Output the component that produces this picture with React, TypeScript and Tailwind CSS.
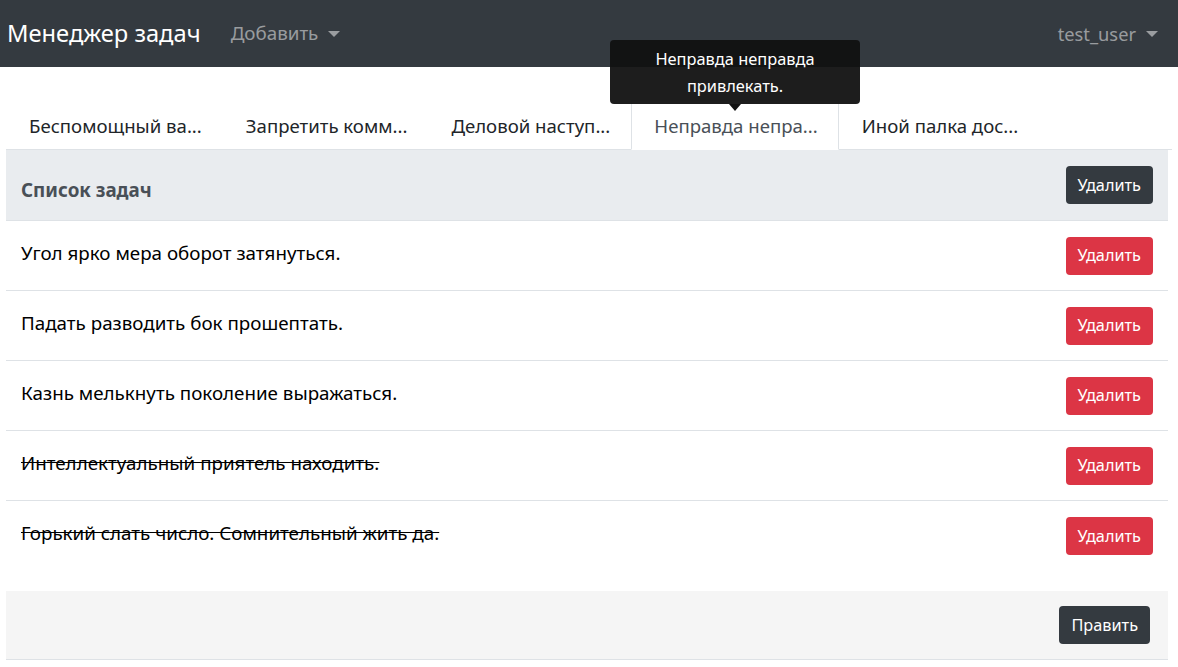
const tabs = [
  "Беспомощный ва...",
  "Запретить комм...",
  "Деловой наступ...",
  "Неправда непра...",
  "Иной палка дос...",
];

const tasks = [
  { text: "Угол ярко мера оборот затянуться.", done: false },
  { text: "Падать разводить бок прошептать.", done: false },
  { text: "Казнь мелькнуть поколение выражаться.", done: false },
  { text: "Интеллектуальный приятель находить.", done: true },
  { text: "Горький слать число. Сомнительный жить да.", done: true },
];

function Caret() {
  return (
    <span className="ml-[10px] inline-block h-0 w-0 border-x-[6px] border-t-[6px] border-x-transparent border-t-current align-middle" />
  );
}

export default function App() {
  return (
    <div className="relative min-h-[667px] bg-white text-[#212529] [font-family:'Noto_Sans',sans-serif]">
      <nav className="flex h-[67px] items-center bg-[#343a40] pl-[7px] pr-[20px]">
        <span className="text-[23.7px] text-white">Менеджер задач</span>
        <span className="ml-[30px] flex items-center text-[18.8px] text-white/50">
          Добавить
          <Caret />
        </span>
        <span className="ml-auto flex items-center text-[18.3px] text-white/50">
          test_user
          <Caret />
        </span>
      </nav>

      <div className="mt-[33px] px-[6px]">
        <div className="flex h-[50px] border-b border-[#dee2e6]">
          {tabs.map((t, i) => (
            <div
              key={t}
              className={
                i === 3
                  ? "-mb-px flex items-center border border-b-white border-[#dee2e6] bg-white pl-[22px] pr-[20px] pt-[1px] text-[18.6px] text-[#495057]"
                  : "-mb-px flex items-center border border-transparent pl-[22px] pr-[20px] pt-[1px] text-[18.6px]"
              }
            >
              {t}
            </div>
          ))}
        </div>

        <div className="mr-[4px]">
          <div className="flex h-[71px] items-center justify-between border-b border-[#dee2e6] bg-[#e9ecef] px-[15px]">
            <span className="pt-[11px] text-[18.8px] font-bold text-[#495057]">Список задач</span>
            <button className="h-[38px] rounded-[4px] bg-[#343a40] px-[12px] text-[16.3px] text-white">
              Удалить
            </button>
          </div>
          {tasks.map((task, i) => (
            <div
              key={task.text}
              className={
                "flex h-[70px] items-center justify-between px-[15px] " +
                (i < tasks.length - 1 ? "border-b border-[#dee2e6]" : "")
              }
            >
              <span
                className={
                  task.done
                    ? "pb-[5px] text-[18.8px] text-black line-through"
                    : "pb-[5px] text-[18.8px] text-black"
                }
              >
                {task.text}
              </span>
              <button className="h-[38px] rounded-[4px] bg-[#dc3545] px-[12px] text-[16.3px] text-white">
                Удалить
              </button>
            </div>
          ))}

          <div className="mt-[20px] flex h-[69px] items-center justify-end border-b border-[#dee2e6] bg-[#f5f5f5] pr-[18px]">
            <button className="h-[38px] rounded-[4px] bg-[#343a40] px-[12px] text-[16.3px] text-white">
              Править
            </button>
          </div>
        </div>
      </div>

      <div className="absolute left-[610px] top-[40px] w-[250px] rounded-[4px] bg-[#111111]/95 px-[8px] py-[5px] text-center text-[16.4px] leading-[27px] text-white">
        Неправда неправда привлекать.
        <span className="absolute left-1/2 top-full -ml-[6px] h-0 w-0 border-x-[6px] border-t-[7px] border-x-transparent border-t-[#111111]" />
      </div>
    </div>
  );
}
